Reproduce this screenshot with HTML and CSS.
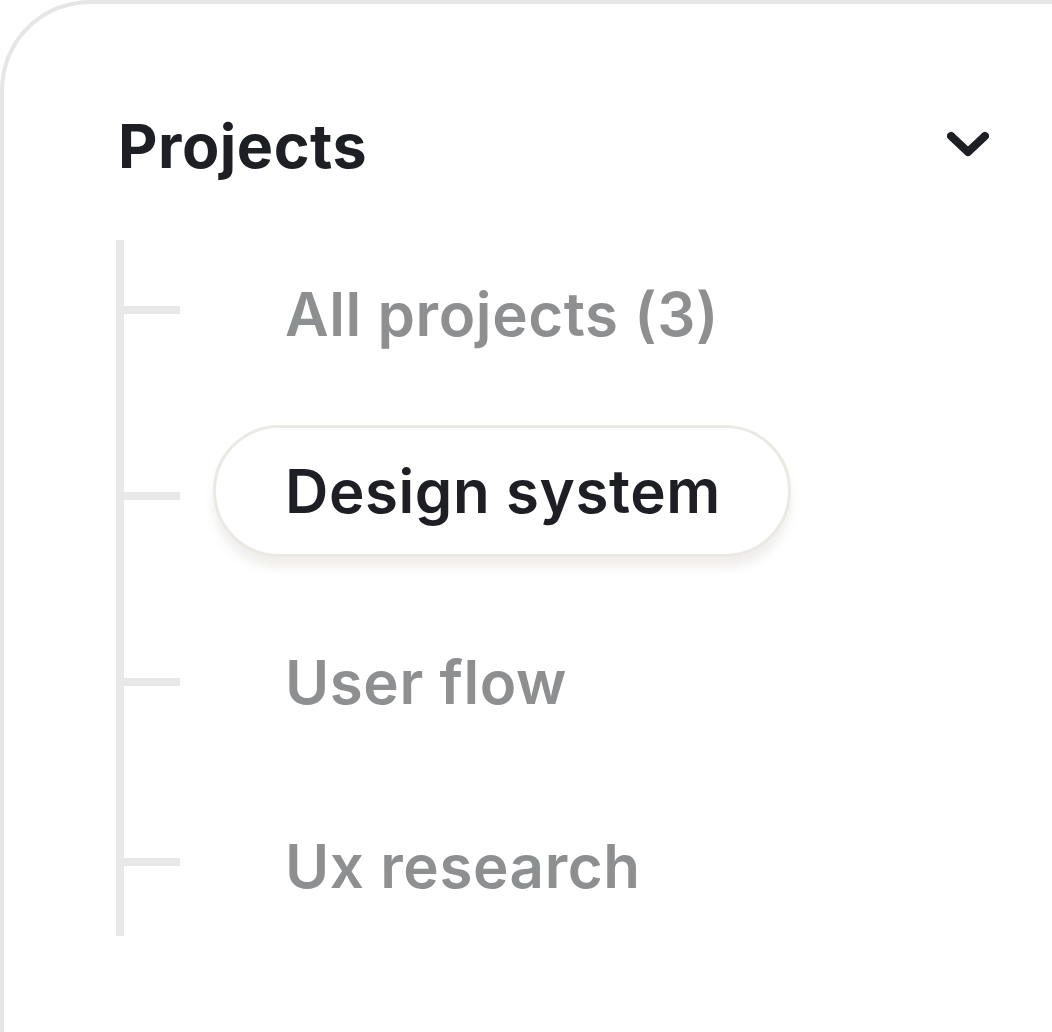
FILE: index.html
```html
<!DOCTYPE html>
<html lang="en">
<head>
<meta charset="utf-8">
<title>Projects</title>
<link rel="stylesheet" href="styles.css">
</head>
<body>
<div class="card">
  <div class="header">
    <h1 class="title">Projects</h1>
    <svg class="chevron" width="42" height="26" viewBox="0 0 42 26" aria-hidden="true">
      <path d="M4 5 L21 21 L38 5" fill="none" stroke="#1e1f24" stroke-width="8" stroke-linecap="round" stroke-linejoin="round"/>
    </svg>
  </div>
  <ul class="tree">
    <li class="item"><span class="tick"></span><span class="label">All projects (3)</span></li>
    <li class="item item-active"><span class="tick"></span><span class="label label-active">Design system</span></li>
    <li class="item"><span class="tick"></span><span class="label">User flow</span></li>
    <li class="item"><span class="tick"></span><span class="label">Ux research</span></li>
  </ul>
</div>
</body>
</html>
```

FILE: styles.css
```css
html, body {
  margin: 0;
  padding: 0;
  background: #ffffff;
  overflow: hidden;
}

body {
  font-family: Inter, "Noto Sans", sans-serif;
  color: #1e1f24;
}

.card {
  box-sizing: border-box;
  width: 1052px;
  height: 1032px;
  border-top: 4px solid #e6e6e6;
  border-left: 4px solid #e6e6e6;
  border-top-left-radius: 90px;
  padding-top: 106px;
  background: #ffffff;
}

.header {
  display: flex;
  align-items: center;
  justify-content: space-between;
  height: 72px;
  padding: 0 63px 0 114px;
}

.title {
  margin: 0;
  font-size: 61px;
  font-weight: 700;
  letter-spacing: 0.5px;
  line-height: 72px;
  color: #1e1f24;
}

.chevron {
  display: block;
  margin-top: -4px;
}

.tree {
  list-style: none;
  margin: 58px 0 0 112px;
  padding: 5px 0 9px 0;
  border-left: 8px solid #e8e8e8;
  display: flex;
  flex-direction: column;
  gap: 50px;
  width: max-content;
}

.item {
  display: flex;
  align-items: center;
  height: 130px;
}

.item-active {
  height: 142px;
}

.tick {
  width: 56px;
  height: 8px;
  background: #e8e8e8;
  flex: none;
}

.label {
  box-sizing: border-box;
  margin-left: 33px;
  padding: 0 67px 0 69px;
  font-size: 60px;
  font-weight: 600;
  letter-spacing: 0.6px;
  line-height: 126px;
  color: #8e8f91;
  white-space: nowrap;
  border: 3px solid transparent;
  border-radius: 66px;
}

.item:first-child .label {
  margin-top: 8px;
}

.item:last-child .label {
  margin-top: 8px;
}

.label-active {
  align-self: flex-start;
  color: #1e1f24;
  background: #ffffff;
  border-color: #ece9e4;
  box-shadow: 0 11px 10px rgba(110, 100, 90, 0.1);
}
```
